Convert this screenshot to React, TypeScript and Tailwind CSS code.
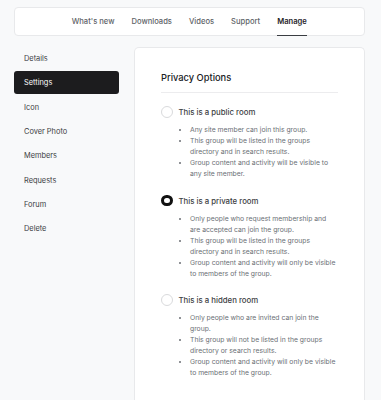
import React from 'react';

const tabs = ["What's new", 'Downloads', 'Videos', 'Support', 'Manage'];
const menu = ['Details', 'Settings', 'Icon', 'Cover Photo', 'Members', 'Requests', 'Forum', 'Delete'];

const options = [
  {
    id: 'public',
    label: 'This is a public room',
    points: [
      'Any site member can join this group.',
      'This group will be listed in the groups directory and in search results.',
      'Group content and activity will be visible to any site member.',
    ],
  },
  {
    id: 'private',
    label: 'This is a private room',
    points: [
      'Only people who request membership and are accepted can join the group.',
      'This group will be listed in the groups directory and in search results.',
      'Group content and activity will only be visible to members of the group.',
    ],
  },
  {
    id: 'hidden',
    label: 'This is a hidden room',
    points: [
      'Only people who are invited can join the group.',
      'This group will not be listed in the groups directory or search results.',
      'Group content and activity will only be visible to members of the group.',
    ],
  },
];

export default function App() {
  const [active, setActive] = React.useState('Settings');
  const [privacy, setPrivacy] = React.useState('private');

  return (
    <div className="min-h-[400px] bg-[#f8f9fa] pt-[7px] pl-[13.5px] pr-[16px] font-['Inter','Liberation_Sans',sans-serif]">
      {/* Top tabs */}
      <div className="flex h-[29px] items-stretch justify-center gap-[17px] rounded-[4px] border border-[#e8e9eb] bg-white">
        {tabs.map(t => (
          <div
            key={t}
            className={
              'relative flex items-center text-[7.6px] ' +
              (t === 'Manage' ? 'font-semibold text-[#1f2328]' : 'font-medium text-[#606368]')
            }
          >
            {t}
            {t === 'Manage' && <span className="absolute -bottom-[1px] left-0 right-0 h-[1.5px] bg-[#3a3d42]" />}
          </div>
        ))}
      </div>

      <div className="mt-[11px] flex gap-[15px]">
        {/* Sidebar */}
        <div className="flex w-[105px] shrink-0 flex-col gap-[1.7px]">
          {menu.map(m => (
            <button
              key={m}
              onClick={() => setActive(m)}
              className={
                'flex h-[22.7px] items-center rounded-[3px] pl-[10.5px] text-left text-[7.4px] ' +
                (m === active ? 'bg-[#1c1c1e] text-white' : 'text-[#3c4043]')
              }
            >
              {m}
            </button>
          ))}
        </div>

        {/* Main card */}
        <div className="flex-1 rounded-t-[5px] border border-b-0 border-[#e8e9eb] bg-white px-[26.5px] pt-[23px] pb-[30px]">
          <h2 className="text-[9.3px] font-medium leading-[13px] text-[#202124]">Privacy Options</h2>
          <div className="mt-[7.5px] h-px bg-[#ececee]" />

          <div className="mt-[13.5px] flex flex-col gap-[15.5px]">
            {options.map(o => {
              const on = privacy === o.id;
              return (
                <div key={o.id}>
                  <label className="flex cursor-pointer items-center gap-[6px]" onClick={() => setPrivacy(o.id)}>
                    <span
                      className={
                        'h-[11.5px] w-[11.5px] shrink-0 rounded-full bg-white ' +
                        (on ? 'border-[3px] border-[#111]' : 'border border-[#d9dadc]')
                      }
                    />
                    <span className="text-[7.8px] font-medium leading-[12px] text-[#3c4043]">{o.label}</span>
                  </label>
                  <ul className="mt-[6px] w-[176px] list-disc pl-[29px] text-[6.8px] leading-[11px] text-[#6b6f75] marker:text-[#6b6f75]">
                    {o.points.map(p => (
                      <li key={p}>{p}</li>
                    ))}
                  </ul>
                </div>
              );
            })}
          </div>
        </div>
      </div>
    </div>
  );
}
